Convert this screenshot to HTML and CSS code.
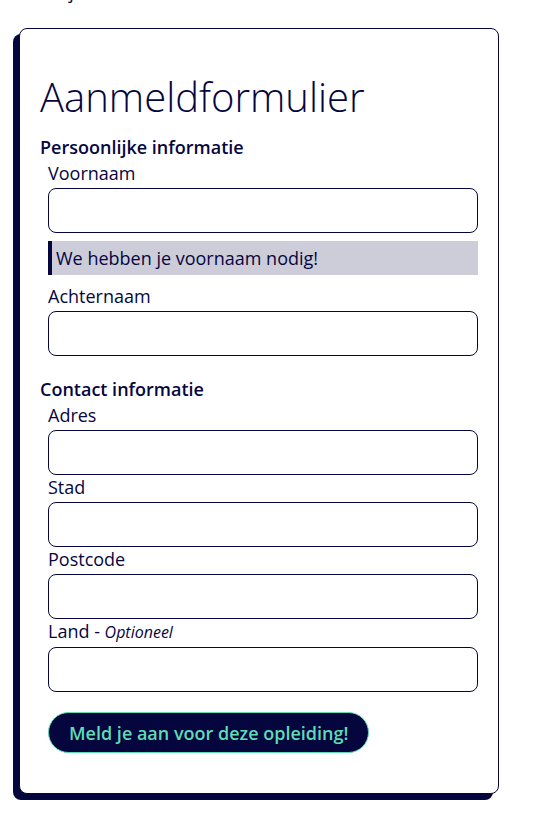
FILE: index.html
```html
<!DOCTYPE html>
<html lang="nl">
<head>
<meta charset="utf-8">
<title>Aanmeldformulier</title>
<link rel="stylesheet" href="styles.css">
</head>
<body>
<p class="intro">Wij</p>
<form class="card">
  <h1 class="title">Aanmeldformulier</h1>
  <fieldset class="group">
    <legend class="group-title">Persoonlijke informatie</legend>
    <label class="field-label" for="voornaam">Voornaam</label>
    <input class="field-input" id="voornaam" type="text">
    <p class="error">We hebben je voornaam nodig!</p>
    <label class="field-label" for="achternaam">Achternaam</label>
    <input class="field-input" id="achternaam" type="text">
  </fieldset>
  <fieldset class="group group-contact">
    <legend class="group-title">Contact informatie</legend>
    <label class="field-label" for="adres">Adres</label>
    <input class="field-input" id="adres" type="text">
    <label class="field-label" for="stad">Stad</label>
    <input class="field-input" id="stad" type="text">
    <label class="field-label" for="postcode">Postcode</label>
    <input class="field-input" id="postcode" type="text">
    <label class="field-label" for="land">Land - <em class="optional">Optioneel</em></label>
    <input class="field-input" id="land" type="text">
  </fieldset>
  <button class="submit" type="submit">Meld je aan voor deze opleiding!</button>
</form>
</body>
</html>
```
FILE: styles.css
```css
* { box-sizing: border-box; }

body {
  margin: 0;
  font-family: "Open Sans", "Noto Sans", sans-serif;
  color: #06063f;
  background: #ffffff;
}

.intro {
  margin: -20px 0 0 48px;
  font-size: 18px;
  line-height: 24px;
}

.card {
  margin: 24px 0 32px 19px;
  width: 480px;
  border: 1px solid #06063f;
  border-radius: 8px;
  box-shadow: -6px 6px 0 0 #06063f;
  padding: 41px 20px 40px 20px;
  background: #fff;
}

.title {
  margin: 0 0 11px 0;
  font-size: 40px;
  font-weight: 300;
  line-height: 54px;
}

.group {
  border: 0;
  margin: 0;
  padding: 0 0 0 8px;
  display: flex;
  flex-direction: column;
}

.group-contact { margin-top: 21px; }

.group-title {
  padding: 0;
  margin: 0 0 0 -8px;
  font-size: 18px;
  font-weight: 600;
  line-height: 24px;
  float: left;
  width: 100%;
}

.field-label {
  display: block;
  font-size: 18px;
  line-height: 24px;
  margin-top: 0;
}

.group-title + .field-label { margin-top: 2px; }

.optional {
  font-size: 16px;
}

.field-input {
  display: block;
  width: 430px;
  height: 45px;
  margin: 3px 0 0 0;
  border: 1px solid #06063f;
  border-radius: 8px;
  background: #fff;
  font: inherit;
}

.error {
  margin: 8px 0 9px 0;
  height: 34px;
  background: #cdcdd9;
  border-left: 4px solid #06063f;
  padding: 0 0 0 4px;
  font-size: 18px;
  line-height: 34px;
}

.submit {
  margin: 20px 0 0 8px;
  height: 41px;
  padding: 0 20px;
  border: 1px solid #5fdcb4;
  border-radius: 21px;
  background: #06063f;
  color: #5fdcb4;
  font-family: "Open Sans", "Noto Sans", sans-serif;
  font-size: 18px;
  font-weight: 600;
  cursor: pointer;
}
```
